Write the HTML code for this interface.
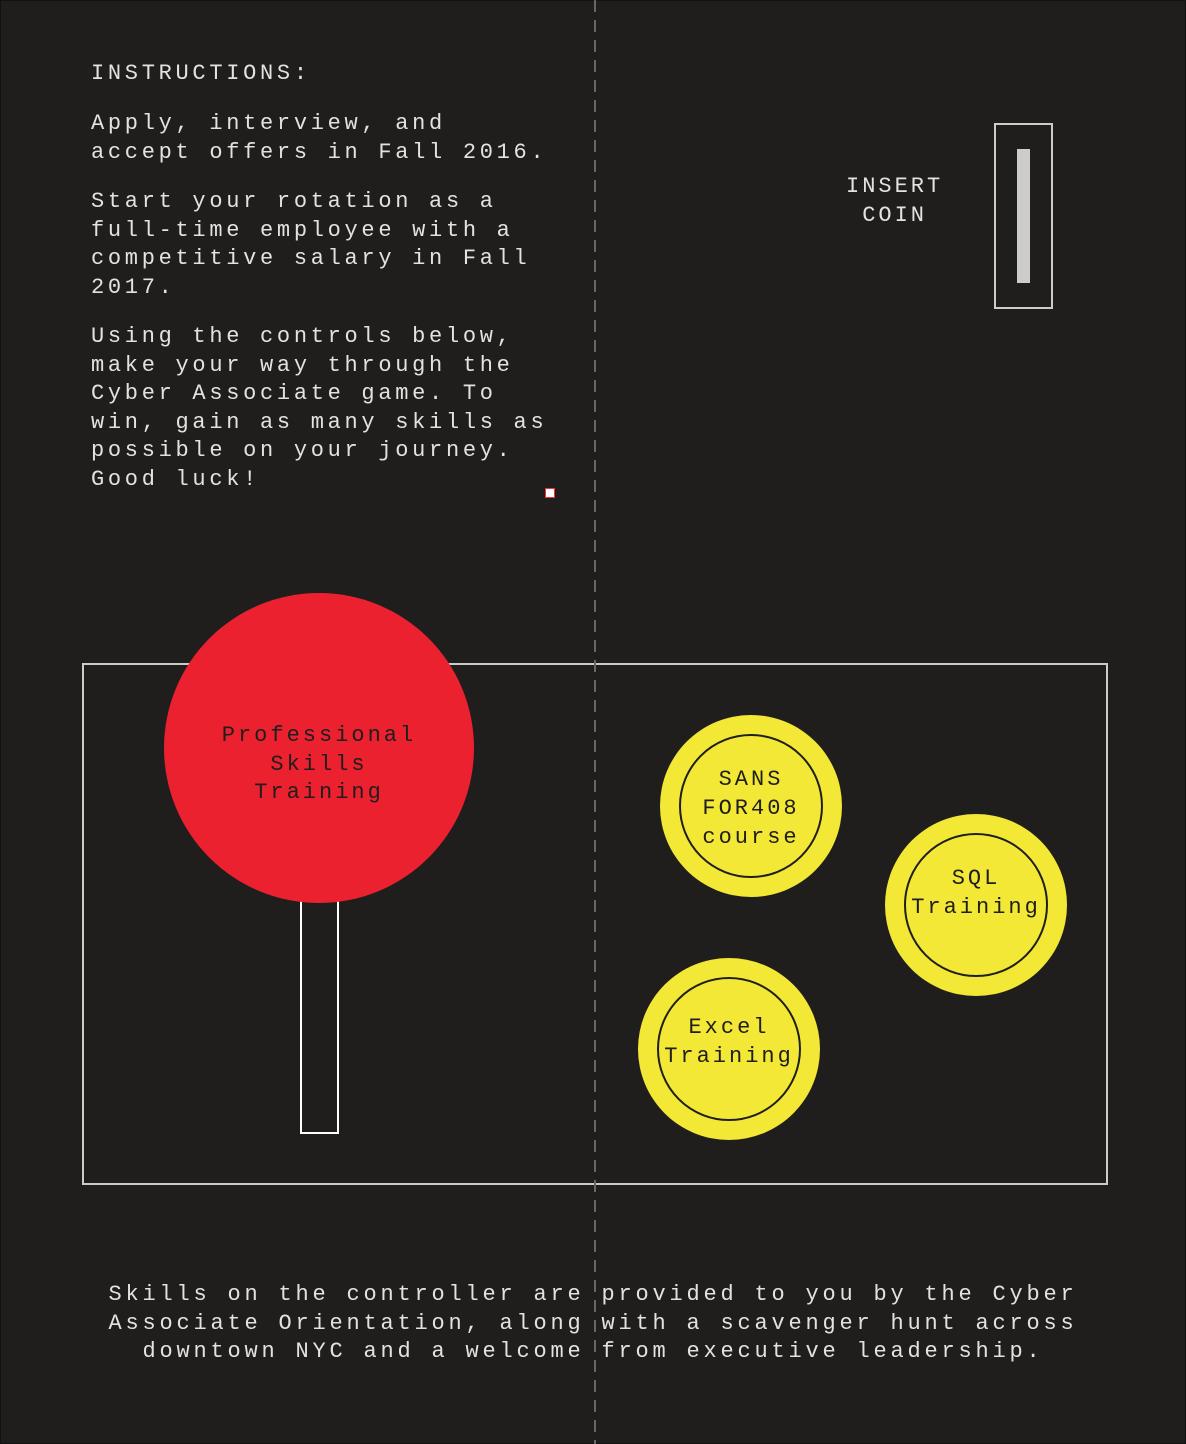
<!DOCTYPE html>
<html><head><meta charset="utf-8"><style>
html,body{margin:0;padding:0;}
body{width:1186px;height:1444px;background:#1f1e1d;position:relative;overflow:hidden;font-family:"Liberation Mono",monospace;color:#e2e2e2;box-shadow:inset 0 0 0 1px #111;}
.t{position:absolute;font-size:22px;letter-spacing:3.7px;line-height:28.5px;white-space:pre;}
.dash{position:absolute;left:594px;top:0;width:2px;height:1444px;background:repeating-linear-gradient(to bottom,#666 0 12px,transparent 12px 20px);z-index:5;}
.c{position:absolute;border-radius:50%;}
.y{background:#f2e835;width:182px;height:182px;}
.y .r{position:absolute;left:19px;top:19px;width:140px;height:140px;border:2px solid #1f1e1d;border-radius:50%;}
.y .l{position:absolute;left:0;width:182px;text-align:center;color:#1f1e1d;font-size:22px;letter-spacing:3px;line-height:29px;white-space:pre;}
</style></head><body>
<div class="t" style="left:91px;top:60px">INSTRUCTIONS:</div>
<div class="t" style="left:91px;top:110px">Apply, interview, and
accept offers in Fall 2016.</div>
<div class="t" style="left:91px;top:188px">Start your rotation as a
full-time employee with a
competitive salary in Fall
2017.</div>
<div class="t" style="left:91px;top:323px">Using the controls below,
make your way through the
Cyber Associate game. To
win, gain as many skills as
possible on your journey.
Good luck!</div>
<div style="position:absolute;left:545px;top:488px;width:8px;height:8px;border:1px solid #e33;background:#fff"></div>
<div class="t" style="left:846px;top:173px;letter-spacing:3px">INSERT
 COIN</div>
<div style="position:absolute;left:994px;top:123px;width:55px;height:182px;border:2px solid #ccc"></div>
<div style="position:absolute;left:1017px;top:149px;width:13px;height:134px;background:#ccc"></div>

<div style="position:absolute;left:82px;top:663px;width:1022px;height:518px;border:2px solid #ccc"></div>
<div style="position:absolute;left:300px;top:880px;width:35px;height:250px;border:2px solid #fff;background:#1f1e1d"></div>
<div class="c" style="left:164px;top:593px;width:310px;height:310px;background:#ec2130"></div>
<div class="t" style="left:164px;top:722px;width:310px;text-align:center;color:#1f1e1d;letter-spacing:3px">Professional
Skills
Training</div>

<div class="c y" style="left:660px;top:715px"><div class="r"></div><div class="l" style="top:50px">SANS
FOR408
course</div></div>
<div class="c y" style="left:885px;top:814px"><div class="r"></div><div class="l" style="top:50px">SQL
Training</div></div>
<div class="c y" style="left:638px;top:958px"><div class="r"></div><div class="l" style="top:55px">Excel
Training</div></div>

<div class="t" style="left:0;top:1281px;width:1186px;text-align:center;letter-spacing:3.8px">Skills on the controller are provided to you by the Cyber
Associate Orientation, along with a scavenger hunt across
downtown NYC and a welcome from executive leadership.</div>
<div class="dash"></div>
</body></html>
